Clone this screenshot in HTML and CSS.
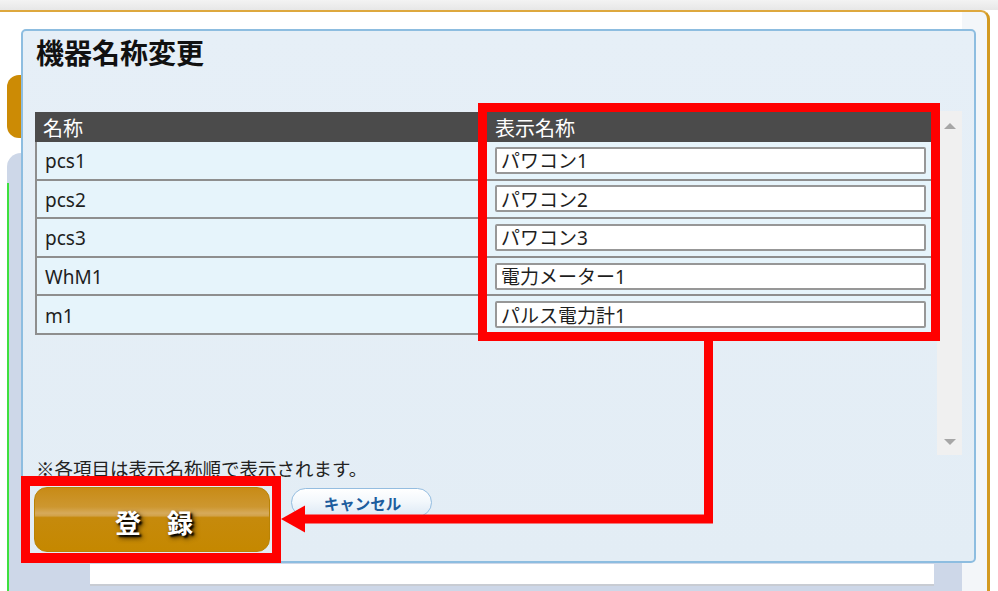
FILE: index.html
```html
<!DOCTYPE html>
<html lang="ja">
<head>
<meta charset="utf-8">
<title>機器名称変更</title>
<link rel="stylesheet" href="styles.css">
</head>
<body>
<div class="topbar"></div>
<div class="frame">
  <div class="tab"></div>
  <div class="panel">
    <div class="panel-inner">
      <div class="sheet"></div>
    </div>
  </div>
</div>

<div class="dialog">
  <h1 class="title">機器名称変更</h1>
  <div class="list">
    <div class="grid">
      <div class="row head"><div class="c1">名称</div><div class="c2">表示名称</div></div>
      <div class="row"><div class="c1">pcs1</div><div class="c2"><input class="field" value="パワコン1"></div></div>
      <div class="row"><div class="c1">pcs2</div><div class="c2"><input class="field" value="パワコン2"></div></div>
      <div class="row"><div class="c1">pcs3</div><div class="c2"><input class="field" value="パワコン3"></div></div>
      <div class="row"><div class="c1">WhM1</div><div class="c2"><input class="field" value="電力メーター1"></div></div>
      <div class="row"><div class="c1">m1</div><div class="c2"><input class="field" value="パルス電力計1"></div></div>
    </div>
    <div class="scrollbar"><span class="arr up"></span><span class="arr down"></span></div>
  </div>
  <p class="note">※各項目は表示名称順で表示されます。</p>
  <div class="actions">
    <button class="btn-reg">登　録</button>
    <button class="btn-cancel">キャンセル</button>
  </div>
</div>

<div class="mark mark-table"></div>
<div class="mark mark-btn"></div>
<svg class="arrow" width="998" height="591" viewBox="0 0 998 591">
  <path d="M708.5 341 V519 H300" fill="none" stroke="#ff0000" stroke-width="9" stroke-linejoin="miter"/>
  <polygon points="281,519 305,505.5 305,532.5" fill="#ff0000"/>
</svg>
</body>
</html>
```
FILE: styles.css
```css
* { box-sizing: border-box; }
html, body { margin: 0; padding: 0; }
body {
  width: 998px;
  height: 591px;
  overflow: hidden;
  position: relative;
  background: #ffffff;
  font-family: "Noto Sans", "Noto Sans CJK JP", sans-serif;
  color: #1e1e1e;
}

/* background page */
.topbar { height: 10px; background: linear-gradient(#f3f3f3, #e7e7e7); }
.frame {
  height: 581px;
  margin-right: 8px;
  border-top: 2px solid #dea83e;
  border-right: 3px solid #d39a22;
  border-top-right-radius: 9px;
  background: linear-gradient(to right, #ffffff 962px, #f3f6f9 962px);
  padding-top: 63px;
}
.tab {
  width: 20px;
  height: 63px;
  margin-left: 7px;
  background: #cc8b05;
  border-radius: 12px 0 0 12px;
}
.panel {
  margin: 15px 0 0 7px;
  width: 955px;
  height: 438px;
  background: #cdd7e8;
  border-top-left-radius: 14px;
  padding-top: 30px;
}
.panel-inner {
  height: 100%;
  border-left: 2px solid #3ee03e;
  padding: 381px 0 0 81px;
}
.sheet {
  width: 844px;
  height: 22px;
  background: #ffffff;
  border-bottom: 2px solid #c8ccd3;
}

/* dialog */
.dialog {
  position: absolute;
  left: 21px;
  top: 29px;
  width: 955px;
  height: 534px;
  border: 2px solid #8dbde0;
  border-radius: 5px;
  background: linear-gradient(#e6eff7, #e3edf5);
  padding: 3px 0 0 12px;
}
.title {
  margin: 0;
  padding-left: 1px;
  font-family: "Noto Sans CJK JP", sans-serif;
  font-size: 28px;
  line-height: 36px;
  font-weight: 700;
  color: #111;
}
.list {
  margin-top: 41px;
  width: 927px;
  height: 344px;
  display: flex;
  gap: 2px;
}
.grid { width: 900px; padding-top: 1px; }
.row {
  display: grid;
  grid-template-columns: 452px 1fr;
  height: 38.6px;
  background: #e6f4fb;
  border-left: 2px solid #8e8e8e;
  border-bottom: 2px solid #8e8e8e;
  font-size: 19px;
}
.row.head {
  height: 30px;
  background: #4b4b4b;
  border-bottom: none;
  border-left-color: #4b4b4b;
  color: #fff;
  font-family: "Noto Sans CJK JP", sans-serif;
  font-size: 20px;
}
.c1 { display: flex; align-items: center; padding: 2px 0 0 8px; }
.head .c1 { padding: 0 0 0 6px; }
.c2 { display: flex; align-items: center; padding: 0 9px 0 6px; }
.head .c2 { padding-left: 6px; }
.field {
  width: 100%;
  height: 27px;
  border: 2px solid #979797;
  border-radius: 2px;
  background: #fff;
  padding: 0 4px;
  font-family: "Noto Sans", "Noto Sans CJK JP", sans-serif;
  font-size: 19px;
  color: #1e1e1e;
}
.scrollbar {
  width: 25px;
  height: 344px;
  background: #f0f0f0;
  display: flex;
  flex-direction: column;
  justify-content: space-between;
  align-items: center;
  padding: 12px 0 10px;
}
.arr { width: 0; height: 0; border-left: 6px solid transparent; border-right: 6px solid transparent; }
.arr.up { border-bottom: 6px solid #a6a6a6; }
.arr.down { border-top: 6px solid #a6a6a6; }

.note {
  margin: 2px 0 0 1px;
  font-family: "Noto Sans CJK JP", sans-serif;
  font-size: 18.5px;
  line-height: 22px;
  color: #222;
}
.actions {
  margin-top: 8px;
  display: flex;
  align-items: flex-start;
  gap: 21px;
}
.btn-reg {
  margin-left: -1px;
  width: 236px;
  height: 65px;
  border: 1px solid #b98305;
  border-radius: 13px;
  background: linear-gradient(#c88b16 0%, #cd9730 30%, #d6aa5a 40%, #d2a24a 44%, #c68a0c 47%, #c58800 100%);
  color: #fff;
  font-family: "Noto Sans CJK JP", sans-serif;
  font-size: 26px;
  font-weight: 700;
  padding: 4px 0 0 4px;
  text-shadow: 2px 2px 2px #000, 3px 3px 5px #3a2500;
}
.btn-cancel {
  margin-top: 1px;
  width: 141px;
  height: 29px;
  border: 1px solid #94bde0;
  border-radius: 15px;
  background: linear-gradient(#ffffff 0%, #f3f8fc 45%, #dde9f5 100%);
  color: #1d5d9e;
  font-family: "Noto Sans CJK JP", sans-serif;
  font-size: 15.5px;
  font-weight: 700;
  padding: 0 0 0 2px;
}

/* annotations */
.mark { position: absolute; border: 9px solid #ff0000; }
.mark-table { left: 478px; top: 103px; width: 462px; height: 238px; }
.mark-btn { left: 21px; top: 476px; width: 260px; height: 87px; border-width: 10px 9px; }
.arrow { position: absolute; left: 0; top: 0; pointer-events: none; }
```
